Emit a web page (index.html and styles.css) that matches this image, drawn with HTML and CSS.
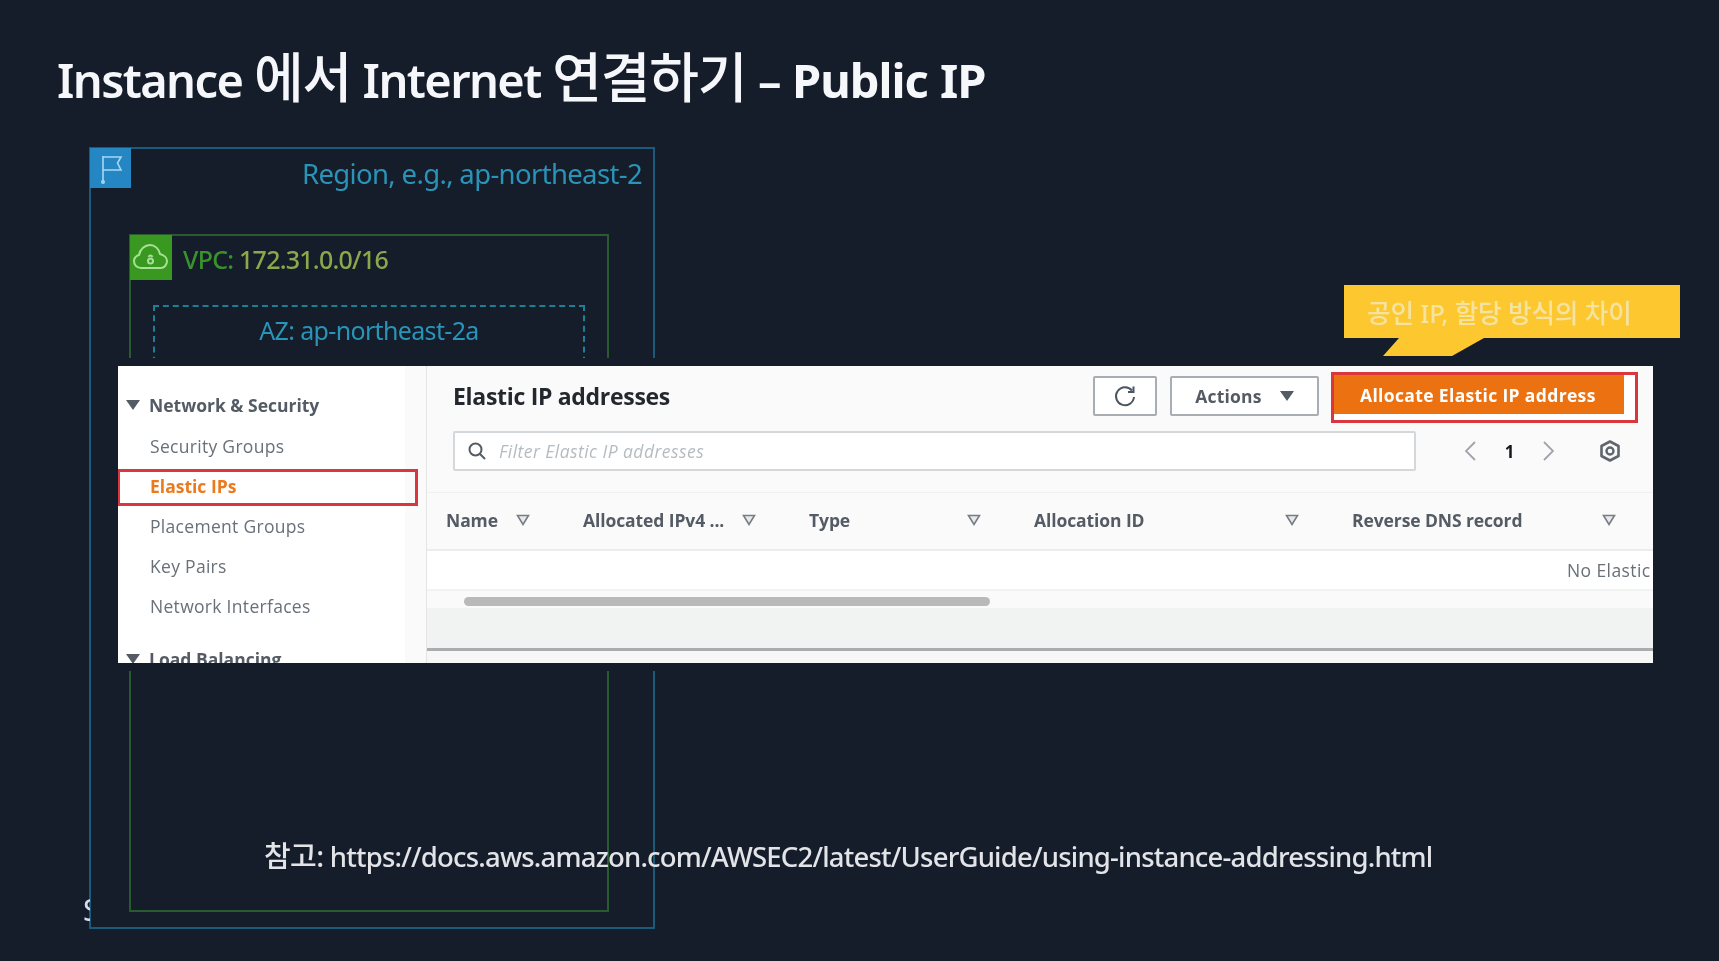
FILE: index.html
```html
<!DOCTYPE html>
<html lang="ko">
<head>
<meta charset="utf-8">
<title>Instance 에서 Internet 연결하기 – Public IP</title>
<link rel="stylesheet" href="styles.css">
</head>
<body>
<div class="slide">
  <h1 class="title">Instance <span class="ko">에서</span> Internet <span class="ko">연결하기</span> <span class="dash">–</span> <span class="tail">Public IP</span></h1>

  <section class="region">
    <div class="region-head">
      <span class="flag-icon">
        <svg width="41" height="40" viewBox="0 0 41 40" fill="none" stroke="#a9d8f0" stroke-width="1.6"><path d="M13 8V34"/><path d="M13 9H31L27.500 15L31 22H13"/><circle cx="13" cy="34" r="1.200"/></svg>
      </span>
      <span class="region-label">Region, e.g., ap-northeast-2</span>
    </div>
    <div class="vpc">
      <div class="vpc-head">
        <span class="vpc-icon">
          <svg width="42" height="45" viewBox="0 0 42 45" fill="none" stroke="#a6e094" stroke-width="2"><path d="M11 33C6 33 4 29 4 26C4 23 6 21 9 20C10 14 15 10 20 10C25 10 29 14 30 19C34 20 37 23 37 26C37 30 34 33 31 33Z"/><circle cx="20.500" cy="26" r="2.500"/><path d="M18.500 22C19.500 20 21.500 20 22.500 22"/></svg>
        </span>
        <span class="vpc-label"><span class="vpc-key">VPC:</span> 172.31.0.0/16</span>
      </div>
      <div class="az"><span class="az-label">AZ: ap-northeast-2a</span></div>
    </div>
  </section>
  <span class="stray"><span>S</span></span>

  <section class="console">
    <nav class="side">
      <div class="side-group"><span class="caret"></span>Network &amp; Security</div>
      <a class="side-item">Security Groups</a>
      <a class="side-item active">Elastic IPs</a>
      <a class="side-item">Placement Groups</a>
      <a class="side-item">Key Pairs</a>
      <a class="side-item">Network Interfaces</a>
      <div class="side-group lower"><span class="caret"></span>Load Balancing</div>
    </nav>
    <div class="main">
      <header class="bar">
        <h2 class="bar-title">Elastic IP addresses</h2>
        <button class="btn btn-icon">
          <svg width="24" height="24" viewBox="0 0 24 24" fill="none" stroke="#4c5560" stroke-width="2"><path d="M19 6.500A9 9 0 1 0 21 13"/><path d="M20.500 2.500V8H15" /></svg>
        </button>
        <button class="btn btn-actions">Actions<span class="caret dark"></span></button>
        <div class="primary-frame"><button class="btn-primary">Allocate Elastic IP address</button></div>
      </header>
      <div class="tools">
        <div class="search">
          <svg width="20" height="20" viewBox="0 0 20 20" fill="none" stroke="#545b64" stroke-width="2"><circle cx="8.500" cy="8.500" r="6"/><path d="M13 13L18 18"/></svg>
          <span class="placeholder">Filter Elastic IP addresses</span>
        </div>
        <div class="pager">
          <svg width="14" height="22" viewBox="0 0 14 22" fill="none" stroke="#a0a5ab" stroke-width="1.800"><path d="M12 2L3 11L12 20"/></svg>
          <b class="page">1</b>
          <svg width="14" height="22" viewBox="0 0 14 22" fill="none" stroke="#a0a5ab" stroke-width="1.800"><path d="M2 2L11 11L2 20"/></svg>
        </div>
        <svg class="gear" width="24" height="24" viewBox="0 0 24 24" fill="none" stroke="#5f6670"><path stroke-width="2.600" d="M12 2.500L20.500 7V17L12 21.500L3.500 17V7Z" stroke-linejoin="round"/><circle cx="12" cy="12" r="3.500" stroke-width="2.400"/></svg>
      </div>
      <div class="head-row">
        <div class="col"><span>Name</span><svg class="filter" width="14" height="12" viewBox="0 0 14 12"><path d="M1.500 1.500H12.500L7 10.500Z"/></svg></div>
        <div class="col"><span>Allocated IPv4 ...</span><svg class="filter" width="14" height="12" viewBox="0 0 14 12"><path d="M1.500 1.500H12.500L7 10.500Z"/></svg></div>
        <div class="col"><span>Type</span><svg class="filter" width="14" height="12" viewBox="0 0 14 12"><path d="M1.500 1.500H12.500L7 10.500Z"/></svg></div>
        <div class="col"><span>Allocation ID</span><svg class="filter" width="14" height="12" viewBox="0 0 14 12"><path d="M1.500 1.500H12.500L7 10.500Z"/></svg></div>
        <div class="col"><span>Reverse DNS record</span><svg class="filter" width="14" height="12" viewBox="0 0 14 12"><path d="M1.500 1.500H12.500L7 10.500Z"/></svg></div>
      </div>
      <div class="empty-row"><span>No Elastic</span></div>
      <div class="scroll"><span class="thumb"></span></div>
      <div class="foot"></div>
    </div>
  </section>

  <aside class="callout">공인 IP, 할당 방식의 차이</aside>
  <p class="note"><span class="note-ko">참고:</span> https://docs.aws.amazon.com/AWSEC2/latest/UserGuide/using-instance-addressing.html</p>
</div>
</body>
</html>
```

FILE: styles.css
```css
* { box-sizing: border-box; }
html, body { margin: 0; padding: 0; background: #151c2a; }
.slide {
  position: relative;
  width: 1719px;
  height: 961px;
  overflow: hidden;
  background: #151c2a;
  font-family: "Noto Sans", "Noto Sans CJK KR", sans-serif;
  filter: blur(0.75px);
}
.title {
  margin: 0;
  padding: 50px 0 0 57px;
  height: 147px;
  font-size: 47px;
  line-height: 60px;
  font-weight: 600;
  letter-spacing: -1.6px;
  word-spacing: 1px;
  color: #f6f7fa;
  white-space: nowrap;
}
.ko { font-size: 54px; font-weight: 500; line-height: 50px; letter-spacing: -1.2px; }
.dash { letter-spacing: -1px; }
.tail { font-weight: 700; letter-spacing: -1px; }

/* diagram */
.region {
  margin-left: 89px;
  width: 566px;
  height: 782px;
  border: 2px solid #1c5a7c;
}
.region-head { display: flex; justify-content: space-between; height: 85px; }
.flag-icon { width: 41px; height: 40px; background: #2487c4; margin: -1px 0 0 -1px; }
.region-label { font-size: 27.500px; line-height: 50px; letter-spacing: -0.65px; color: #2a94b8; padding-right: 11px; }
.vpc {
  margin-left: 38px;
  width: 480px;
  height: 678px;
  border: 2px solid #2a5a30;
}
.vpc-head { display: flex; height: 69px; }
.vpc-icon { width: 42px; height: 45px; background: #39981f; margin: -1px 0 0 -1px; }
.vpc-label { font-size: 25px; line-height: 46px; padding-left: 11px; letter-spacing: -0.75px; color: #8ca84c; font-weight: 500; }
.vpc-key { color: #39932c; }
.az {
  margin-left: 22px;
  width: 432px;
  height: 120px;
  border: 2px dashed #1b7f96;
  text-align: center;
  font-size: 25px;
  line-height: 46px;
  letter-spacing: -0.65px;
  color: #2a94b8;
}
.stray {
  position: absolute;
  left: 83px;
  top: 895px;
  width: 7px;
  height: 30px;
  overflow: hidden;
  font-size: 30px;
  line-height: 30px;
  color: #d6dcf0;
}

/* console panel */
.console {
  position: absolute;
  left: 118px;
  top: 366px;
  width: 1535px;
  height: 297px;
  display: flex;
  overflow: hidden;
  background: #fff;
  box-shadow: 0 0 0 8px #151c2a;
  font-family: "Open Sans", "Noto Sans", sans-serif;
  color: #545b64;
}
.side {
  width: 308px;
  flex: none;
  padding-top: 24px;
  background: linear-gradient(90deg, #fff 287px, #fafafa 287px);
  font-size: 17.500px;
}
.side-group { display: flex; align-items: center; height: 30px; font-weight: 700; color: #545b64; padding-left: 8px; }
.side-group.lower { margin-top: 17px; }
.caret {
  display: inline-block;
  flex: none;
  width: 0;
  height: 0;
  margin-right: 9px;
  border-left: 7px solid transparent;
  border-right: 7px solid transparent;
  border-top: 10px solid #545b64;
}
.side-item { display: block; height: 40px; padding-left: 32px; line-height: 38px; letter-spacing: 0.3px; color: #687078; }
.side-group + .side-item { margin-top: 7px; }
.side-item.active {
  margin: 2px 8px 1px 0;
  height: 37px;
  border: 3px solid #d9363e;
  border-left-width: 2px;
  padding-left: 30px;
  line-height: 28px;
  font-weight: 700;
  letter-spacing: 0;
  color: #ec7a1c;
}

.main { flex: 1; min-width: 0; background: #fff; border-left: 1px solid #e4e4e4; }
.bar { display: flex; align-items: center; height: 65px; background: #fafafa; padding: 0 15px 5px 26px; }
.bar-title { margin: 0 auto 0 0; font-size: 23px; font-weight: 700; letter-spacing: -0.3px; color: #24282e; }
.btn {
  height: 40px;
  background: #fff;
  border: 2px solid #a8adb3;
  border-radius: 2px;
  font: inherit;
  padding: 0;
}
.btn-icon { width: 64px; margin-right: 13px; display: flex; align-items: center; justify-content: center; }
.btn-actions {
  width: 149px;
  margin-right: 12px;
  display: flex;
  align-items: center;
  justify-content: center;
  font-size: 17.500px;
  font-weight: 700;
  letter-spacing: 0.2px;
  color: #545b64;
}
.caret.dark { margin: 0 0 0 18px; border-left-width: 7px; border-right-width: 7px; }
.primary-frame {
  width: 307px;
  height: 51px;
  border: 3px solid #d9363e;
  background: #fff;
  margin-top: 3px;
}
.btn-primary {
  display: block;
  width: 290px;
  height: 39px;
  border: 0;
  padding: 0 0 0 26px;
  text-align: left;
  background: #ec7211;
  font: inherit;
  font-size: 17.500px;
  font-weight: 700;
  letter-spacing: 0.35px;
  color: #fff;
}
.tools { display: flex; align-items: flex-start; height: 61px; background: #fafafa; padding-left: 26px; }
.search {
  display: flex;
  align-items: center;
  gap: 12px;
  width: 963px;
  height: 40px;
  padding-left: 12px;
  background: #fff;
  border: 2px solid #d5d8da;
  border-radius: 2px;
}
.placeholder { font-style: italic; font-size: 17.500px; letter-spacing: 0.45px; color: #b5bcc0; }
.pager { display: flex; align-items: center; justify-content: space-between; width: 93px; height: 40px; margin-left: 47px; }
.page { font-size: 17px; color: #16191f; }
.gear { margin: 8px 0 0 42px; }
.head-row {
  display: grid;
  grid-template-columns: 137px 226px 225px 318px 317px;
  align-items: center;
  height: 59px;
  padding: 0 0 2px 19px;
  background: #fafafa;
  border-top: 1px solid #f0f0f0;
  border-bottom: 2px solid #eaeded;
  font-size: 17.500px;
  font-weight: 700;
  letter-spacing: -0.1px;
  color: #545b64;
  white-space: nowrap;
}
.col { display: flex; justify-content: space-between; align-items: center; padding-right: 53px; }
.filter { flex: none; fill: #e8e9ea; stroke: #767d85; stroke-width: 1.600; }
.empty-row {
  height: 40px;
  display: flex;
  align-items: center;
  padding-left: 1140px;
  border-bottom: 2px solid #f1f2f2;
  font-size: 17.500px;
  letter-spacing: 0.4px;
  color: #687078;
  white-space: nowrap;
  overflow: hidden;
}
.scroll { height: 17px; padding: 6px 0 0 37px; background: #fafafa; }
.thumb { display: block; width: 526px; height: 9px; border-radius: 5px; background: #b9b9b9; }
.foot {
  height: 56px;
  background: linear-gradient(#f1f2f2 0 40px, #a9adb0 40px 43px, #f7f7f7 43px);
}

.callout {
  position: absolute;
  left: 1344px;
  top: 285px;
  width: 336px;
  height: 71px;
  padding: 0 0 18px 23px;
  display: flex;
  align-items: center;
  background: #fcc72f;
  clip-path: polygon(0 0, 100% 0, 100% 53px, 140px 53px, 108px 71px, 39px 71px, 55px 53px, 0 53px);
  font-size: 25.700px;
  font-weight: 500;
  letter-spacing: -0.2px;
  color: #f6e3a0;
}
.note {
  position: absolute;
  left: 264px;
  top: 836px;
  margin: 0;
  font-size: 27.500px;
  line-height: 40px;
  font-weight: 500;
  letter-spacing: -0.8px;
  color: #e2e4e8;
  white-space: nowrap;
}
.note-ko { font-size: 29px; letter-spacing: -0.6px; }
```
